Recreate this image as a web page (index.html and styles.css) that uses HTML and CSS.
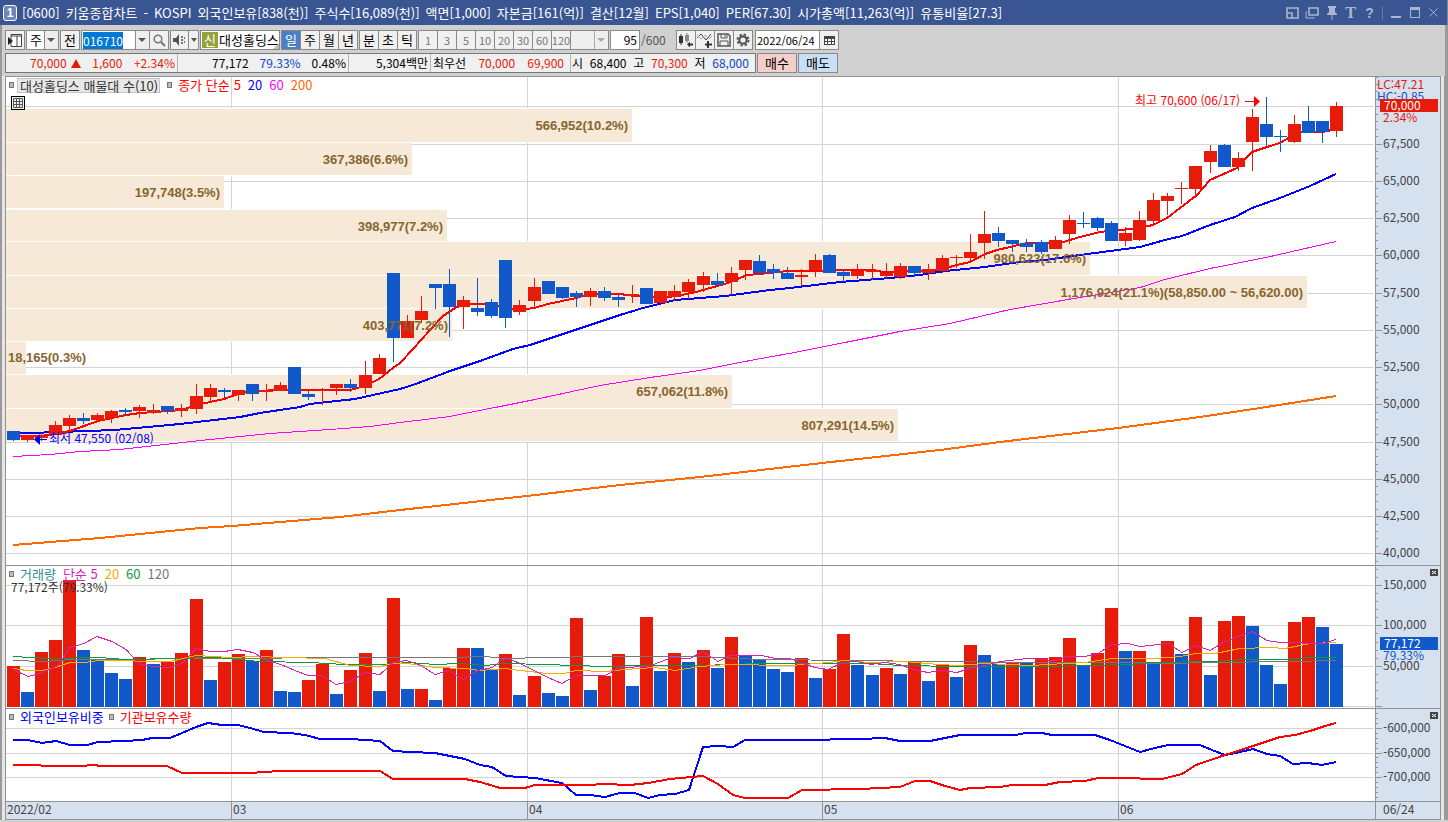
FILE: index.html
```html
<!DOCTYPE html>
<html lang="ko">
<head>
<meta charset="utf-8">
<title>[0600] 키움종합차트</title>
<link rel="stylesheet" href="styles.css">
</head>
<body>
<header class="titlebar">
  <span class="badge">1</span>
  <h1 class="title">
    <span>[0600]</span><span>키움종합차트</span><span>-</span><span>KOSPI</span><span>외국인보유[838(천)]</span><span>주식수[16,089(천)]</span><span>액면[1,000]</span><span>자본금[161(억)]</span><span>결산[12월]</span><span>EPS[1,040]</span><span>PER[67.30]</span><span>시가총액[11,263(억)]</span><span>유통비율[27.3]</span>
  </h1>
  <div class="window-buttons">
    <button type="button" aria-label="도킹"><svg width="13" height="12" viewBox="0 0 13 12"><path d="M1 1h11v10h-11z M1 6h5v5" fill="none" stroke="currentColor" stroke-width="1.6"/></svg></button>
    <button type="button" aria-label="새 창"><svg width="14" height="12" viewBox="0 0 14 12"><path d="M4 1h9v7h-9z" fill="none" stroke="currentColor" stroke-width="1.6"/><path d="M2 5h-1v6h8v-1" fill="none" stroke="currentColor"/></svg></button>
    <button type="button" aria-label="고정"><svg width="12" height="14" viewBox="0 0 12 14"><path d="M2 0h8v2h-1v4l2 2v1h-4.500v5h-1v-5h-4.500v-1l2-2v-4h-1z" fill="currentColor"/></svg></button>
    <button type="button" class="serif" aria-label="글꼴">T</button>
    <button type="button" class="help" aria-label="도움말">?</button>
    <span class="divider"></span>
    <button type="button" aria-label="최소화"><svg width="10" height="12" viewBox="0 0 10 12"><path d="M0 9h10v2h-10z" fill="currentColor"/></svg></button>
    <button type="button" aria-label="최대화"><svg width="10" height="11" viewBox="0 0 10 11"><path d="M0 0h10v11h-10z M1 3v7h8v-7z" fill="currentColor" fill-rule="evenodd"/></svg></button>
    <button type="button" aria-label="닫기"><svg width="9" height="9" viewBox="0 0 9 9"><path d="M.5.5l8 8M8.500.5l-8 8" stroke="currentColor" fill="none"/></svg></button>
  </div>
</header>

<div class="tools">
  <div class="row">
    <button type="button" class="box btn w20" aria-label="패널"><svg width="14" height="13" viewBox="0 0 14 13"><path d="M3 .5h10.500v12h-10.500z" fill="#fff" stroke="#444"/><path d="M3 2h11M9 2v10" stroke="#444" fill="none"/><path d="M0 3l5 4-5 4z" fill="#222"/></svg></button>
    <label class="combo w33"><select aria-label="종목 종류"><option>주</option></select><svg class="arrow" width="14" height="18" viewBox="0 0 14 18"><path d="M0 0h14v18h-14z" fill="#eee"/><path d="M.5 0v18" stroke="#8a8a8a"/><path d="M3 7h8l-4 4z" fill="#555"/></svg></label>
    <button type="button" class="box btn w20">전</button>
    <div class="group">
      <label class="combo w69"><input id="code" value="016710" aria-label="종목코드"><svg class="arrow" width="14" height="18" viewBox="0 0 14 18"><path d="M0 0h14v18h-14z" fill="#eee"/><path d="M.5 0v18" stroke="#8a8a8a"/><path d="M3 7h8l-4 4z" fill="#555"/></svg></label>
      <button type="button" class="box btn w20" aria-label="검색"><svg width="13" height="13" viewBox="0 0 13 13"><circle cx="5" cy="5" r="3.800" fill="none" stroke="#777" stroke-width="1.500"/><path d="M8 8l4 4" stroke="#777" stroke-width="2.200"/></svg></button>
    </div>
    <div class="group">
      <button type="button" class="box btn w18" aria-label="음성"><svg width="14" height="12" viewBox="0 0 14 12"><path d="M0 4h3l3-4v12l-3-4h-3z" fill="#555"/><path d="M8 2h2v2h-2zM8 5h2v2h-2zM8 8h2v2h-2zM11 3h1v2h-1zM11 7h1v2h-1z" fill="#777"/></svg></button>
      <button type="button" class="box btn w11" aria-label="음성 메뉴"><svg width="6" height="4" viewBox="0 0 6 4"><path d="M0 0h6l-3 4z" fill="#555"/></svg></button>
    </div>
    <div class="box name"><span class="credit">신</span><span class="stock">대성홀딩스</span><svg class="corner" width="6" height="6" viewBox="0 0 6 6"><path d="M6 0v6h-6z" fill="#bbb"/></svg></div>
    <div class="group">
      <button type="button" class="box btn w20 on">일</button><button type="button" class="box btn w20">주</button><button type="button" class="box btn w20">월</button><button type="button" class="box btn w20">년</button>
    </div>
    <div class="group">
      <button type="button" class="box btn w20">분</button><button type="button" class="box btn w20">초</button><button type="button" class="box btn w20">틱</button>
    </div>
    <div class="group dim">
      <button type="button" class="box btn w20">1</button><button type="button" class="box btn w20">3</button><button type="button" class="box btn w20">5</button><button type="button" class="box btn w20">10</button><button type="button" class="box btn w20">20</button><button type="button" class="box btn w20">30</button><button type="button" class="box btn w20">60</button><button type="button" class="box btn w20">120</button>
      <label class="combo w39"><select aria-label="주기" disabled><option></option></select><svg class="arrow" width="14" height="18" viewBox="0 0 14 18"><path d="M0 0h14v18h-14z" fill="#eee"/><path d="M.5 0v18" stroke="#aaa"/><path d="M3 7h8l-4 4z" fill="#aaa"/></svg></label>
    </div>
    <input class="box count" value="95" aria-label="봉 개수"><span class="total">/600</span>
    <div class="group icons">
      <button type="button" class="box btn w20" aria-label="차트 유형 추가"><svg width="16" height="15" viewBox="0 0 16 15"><path d="M1 3h4v7h-4zM2.500 1h1v11h-1z" fill="#333"/><path d="M7 2h4v6h-4zM8.500 0h1v10h-1z" fill="#888"/><path d="M9 11.500l3-3v2h3v2h-3v2z" fill="#333"/></svg></button>
      <button type="button" class="box btn w20" aria-label="지표 추가"><svg width="16" height="15" viewBox="0 0 16 15"><path d="M0 5l4-4 5 6 5-6" fill="none" stroke="#444"/><path d="M0 2l4 4 4-4 4 4 3-3" fill="none" stroke="#aaa"/><path d="M11 8v7M8 11.500h7" stroke="#333" stroke-width="2"/></svg></button>
      <button type="button" class="box btn w20" aria-label="저장"><svg width="14" height="14" viewBox="0 0 14 14"><path d="M1 1h10l2 2v10h-12z" fill="none" stroke="#555" stroke-width="1.500"/><path d="M4 1v4h6v-4M3 13v-5h8v5M8 2v2" fill="none" stroke="#555"/></svg></button>
      <button type="button" class="box btn w20" aria-label="설정"><svg width="14" height="14" viewBox="0 0 14 14"><circle cx="7" cy="7" r="3.700" fill="none" stroke="#555" stroke-width="2.200"/><circle cx="7" cy="7" r="5.600" fill="none" stroke="#555" stroke-width="1.800" stroke-dasharray="2.400 2"/></svg></button>
    </div>
    <div class="group">
      <input class="box date" value="2022/06/24" aria-label="기준일">
      <button type="button" class="box btn w20" aria-label="달력"><svg width="11" height="10" viewBox="0 0 11 10"><path d="M0 1h11v9h-11z" fill="#444"/><path d="M1 4h2v2h-2zM4 4h3v2h-3zM8 4h2v2h-2zM1 7h2v2h-2zM4 7h3v2h-3zM8 7h2v2h-2z" fill="#fff"/></svg></button>
    </div>
  </div>

  <div class="row">
    <div class="box quote">
      <div class="seg s1 up"><span>70,000<svg class="tri" width="10" height="9" viewBox="0 0 10 9"><path d="M5 0l5 9h-10z" fill="currentColor"/></svg></span><span>1,600</span><span>+2.34%</span></div>
      <div class="seg s2"><span>77,172</span><span class="down">79.33%</span><span>0.48%</span></div>
      <div class="seg s3"><span>5,304백만</span></div>
      <div class="seg s4"><span>최우선</span><span class="up">70,000</span><span class="up">69,900</span></div>
      <div class="seg s5"><span>시</span><span>68,400</span><span>고</span><span class="up">70,300</span><span>저</span><span class="down">68,000</span></div>
    </div>
    <button type="button" class="box btn trade buy">매수</button>
    <button type="button" class="box btn trade sell">매도</button>
  </div>
</div>

<main class="chart">
  <section class="panel">
    <svg id="price"></svg>
    <div class="legend">
      <i class="dot"></i><span class="tag">대성홀딩스 매물대 수(10)</span><i class="dot gap"></i>
      <span class="ma5">종가 단순</span><span class="ma5">5</span><span class="ma20 sp">20</span><span class="ma60 sp">60</span><span class="ma200 sp">200</span>
    </div>
    <button type="button" class="grid-btn" aria-label="표 보기"><svg width="12" height="12" viewBox="0 0 12 12"><path d="M1.500 1.500h9v9h-9zM1 4.500h10M4.500 2v9M7.500 2v9M1 7.500h10" fill="none" stroke="#555"/></svg></button>
  </section>
  <section class="panel">
    <svg id="volume"></svg>
    <div class="legend">
      <i class="dot"></i><span class="vt">거래량</span><span class="v5 sp">단순 5</span><span class="v20 sp">20</span><span class="v60 sp">60</span><span class="v120 sp">120</span>
    </div>
    <div class="reading">77,172주(79.33%)</div>
    <button type="button" class="close" aria-label="거래량 닫기"><svg width="8" height="7" viewBox="0 0 8 7"><path d="M2 2l4 3M6 2l-4 3" stroke="#fff" fill="none"/></svg></button>
  </section>
  <section class="panel">
    <svg id="holding"></svg>
    <div class="legend">
      <i class="dot"></i><span class="ma20">외국인보유비중</span><i class="dot near"></i><span class="ma5">기관보유수량</span>
    </div>
    <button type="button" class="close" aria-label="보유량 닫기"><svg width="8" height="7" viewBox="0 0 8 7"><path d="M2 2l4 3M6 2l-4 3" stroke="#fff" fill="none"/></svg></button>
  </section>
  <section class="panel last"><svg id="dates"></svg></section>
</main>
<script src="chart.js"></script>
</body>
</html>
```
FILE: styles.css
```css
* { box-sizing: border-box; }
html { height: 100%; }
body {
  margin: 0; min-height: 100vh; display: flex; flex-direction: column;
  background: #d0d0d0; color: #000;
  font: 13px/14px "Noto Sans CJK KR", sans-serif;
}
button, input, select { font: inherit; color: inherit; margin: 0; padding: 0; border-radius: 0; }
button svg { display: block; }

.titlebar {
  flex: none; height: 25px; display: flex; align-items: center; padding: 0 7px 0 3px;
  background: #395592; color: #fff; border-right: 1px solid #7d8796;
}
.badge {
  width: 14px; height: 16px; border: 1px solid #fff; border-radius: 3px; background: #6f86b8;
  text-align: center; font: bold 12px/14px "Liberation Sans", sans-serif;
}
.title { margin: 0 0 0 5px; display: flex; gap: 6px; font: inherit; white-space: nowrap; }
.window-buttons { margin-left: auto; display: flex; align-items: center; gap: 6px; color: #a9b6d3; }
.window-buttons button { border: 0; background: none; min-width: 13px; display: flex; justify-content: center; }
.window-buttons .serif { font: bold 16px/16px "Liberation Serif", serif; }
.window-buttons .help { font: bold 14px/16px "Liberation Sans", sans-serif; }
.divider { width: 1px; height: 14px; background: #6b7ba3; }

.tools {
  flex: none; height: 51px; padding: 5px 5px 0 3px; display: flex; flex-direction: column; gap: 3px;
  border-left: 2px solid #9a9a9a; border-right: 3px solid #9a9a9a;
}
.row { display: flex; height: 20px; align-items: stretch; white-space: nowrap; gap: 1px; }
.group { display: flex; }
.group > * + * { margin-left: -1px; }
.box { border: 1px solid #8a8a8a; background: #f0f0f0; flex: none; }
.btn { display: flex; align-items: center; justify-content: center; }
.w11 { width: 11px; }
.w18 { width: 19px; }
.w20 { width: 20px; }
.w33 { width: 33px; }
.w69 { width: 69px; }
.w39 { width: 39px; }
.combo { position: relative; display: block; flex: none; }
.combo select, .combo input {
  display: block; width: 100%; height: 20px; padding: 0 15px 0 3px; appearance: none;
  background: #fff; border: 1px solid #8a8a8a; outline: none;
}
.combo input { font-size: 12px; padding-left: 1px; }
.combo select:disabled { background: #efefef; opacity: 1; }
.arrow { position: absolute; right: 1px; top: 1px; pointer-events: none; }
::selection { background: #0078d7; color: #fff; }
.name { width: 80px; display: flex; position: relative; background: #fff; align-items: center; padding-left: 1px; overflow: hidden; }
.credit { width: 16px; height: 16px; background: #93a33a; color: #fff; text-align: center; line-height: 16px; flex: none; }
.stock { margin-left: 1px; }
.corner { position: absolute; right: 0; bottom: 0; }
.on { background: #4a7fc4; color: #fff; }
.dim { color: #777; font-size: 11px; }
.count { width: 30px; text-align: right; background: #fff; padding-right: 2px; font-size: 12px; }
.total { width: 33px; color: #555; line-height: 20px; font-size: 12px; }
.icons { margin: 0 1px; }
.date { width: 65px; background: #fff; padding-left: 1px; font-size: 11px; }

.quote { display: flex; width: 751px; border-color: #777; font-size: 12px; }
.seg { display: flex; align-items: center; justify-content: space-between; border-right: 1px solid #b5b5b5; padding: 0 2px; }
.s1 { width: 172px; padding-left: 24px; }
.s2 { width: 171px; padding-left: 34px; }
.s3 { width: 82px; justify-content: flex-end; }
.s4 { width: 140px; padding-right: 6px; }
.s5 { flex: 1; border-right: 0; padding: 0 6px 0 1px; }
.tri { margin-left: 4px; }
.up { color: #e61b0a; }
.down { color: #1144cc; }
.trade { width: 40px; }
.buy { background: #f4cfca; }
.sell { background: #c8dff5; }

.chart {
  flex: 1; min-height: 400px; margin: 0 7px 2px 5px; display: grid;
  grid-template-rows: 489fr 143fr 93fr 17fr;
  border: 1px solid #929292; background: #fff;
  box-shadow: -3px 0 #e6e6e6, -5px 0 #9a9a9a, 3px 0 #e6e6e6, 7px 0 #9a9a9a;
}
.panel { position: relative; min-height: 0; border-bottom: 1px solid #929292; overflow: hidden; }
.last { border-bottom: 0; }
.panel > svg { position: absolute; left: 0; top: 0; width: 100%; height: 100%; }
.legend { position: absolute; left: 3px; top: 0; display: flex; align-items: center; white-space: nowrap; height: 16px; }
.dot { width: 5px; height: 6px; border: 1px solid #777; background: #bbb; margin-right: 6px; }
.dot.gap { margin: 0 6px 0 7px; }
.dot.near { margin: 0 6px 0 5px; }
.tag { border: 1px solid #c4c4c4; background: #e8e8e8; color: #333; padding: 0 1px 0 2px; line-height: 13px; margin-left: -3px; }
.legend .ma5 + .ma5 { margin-left: 4px; }
.sp { margin-left: 7px; }
.ma5 { color: #f00; }
.ma20 { color: #00f; }
.ma60 { color: #f0f; }
.ma200 { color: #f60; }
.vt { color: #2a9090; }
.v5 { color: #d91fb4; }
.v20 { color: #f0ad00; }
.v60 { color: #0a9a3a; }
.v120 { color: #777; }
.reading { position: absolute; left: 5px; top: 14px; color: #333; font-size: 12px; }
.grid-btn { position: absolute; left: 5px; top: 19px; width: 14px; height: 14px; border: 1px solid #000; background: #eee; }
.close { position: absolute; right: 2px; top: 3px; width: 8px; height: 7px; border: 0; background: #444; }

svg text { font: 12px "Noto Sans CJK KR", sans-serif; fill: #444; }
svg text.band { font: bold 13px "Liberation Sans", sans-serif; fill: #86662e; }
svg text.blue { fill: #00f; }
svg text.red { fill: #f00; }
svg text.axis-up { fill: #e61b0a; }
svg text.axis-down { fill: #1155cc; }
svg text.white { fill: #fff; }
```
FILE: chart.js
```js
const UP = '#e61b0a', DOWN = '#1159cb', GRID = '#d4d4d4', LINE = '#929292', AXIS = '#d6e1ef';
const PLOT = [6, 1375], RIGHT = 1440;
const MONTHS = [[231, '03'], [527, '04'], [822, '05'], [1118, '06']];

// direction, high, low, body top, body bottom
const candles = `d431,441,431,440 u435,442,435,440 u433,441,436,438 u421,435,425,435 u415,432,418,426 d413,424,418,421
u413,422,415,420 u410,423,411,418 d408,416,410,412 u405,418,407,411 u404,414,410,413 d406,414,406,411 u404,417,408,411
u384,414,396,409 u384,402,388,397 d388,398,390,392 u390,401,390,395 d384,401,384,394 u384,401,390,392 u382,391,385,391
d367,394,367,394 d390,400,394,397 u388,405,390,391 u384,395,384,388 d379,392,384,388 u361,394,375,388 u354,374,358,374
d273,362,273,338 u315,338,321,338 u296,323,311,320 d284,309,284,288 d269,337,284,307 u296,329,300,307 d278,316,308,312
d299,318,302,316 d260,328,260,318 u300,315,305,312 u278,308,287,301 d281,294,281,294 d287,299,287,298 d291,307,293,297
u288,306,291,297 d287,301,291,298 d294,307,297,300 u285,303,294,296 d288,304,288,304 u291,303,291,303 u285,301,291,297
u279,299,282,292 u272,292,276,285 d273,285,281,285 u267,295,273,282 u260,280,260,270 d255,273,261,273 d264,279,269,273
d267,279,273,279 u269,286,275,277 u254,277,260,270 d254,273,255,273 d269,282,272,276 u264,279,271,276 u264,280,270,272
u263,279,273,276 u263,279,266,277 d266,277,266,273 u264,280,269,273 u255,273,258,271 u255,268,257,258 u234,262,252,258
u211,259,234,243 d227,247,233,241 d240,252,240,244 d239,252,243,247 d240,254,242,252 u236,249,240,249 u215,244,220,234
d212,228,223,224 d217,231,218,228 d221,241,223,241 u227,246,233,241 u211,241,220,240 u193,224,200,221 u193,215,196,201
u182,204,188,189 u166,198,166,189 u145,173,151,162 d144,167,145,167 u152,171,158,167 u109,171,117,142 d97,146,124,137
d130,152,136,137 u115,143,124,142 d106,133,121,133 d121,143,121,132 u102,137,106,131`;

const volumes = `u666 d692 u652 u640 u580 d650 d660 d673 d679 u657 d664 u662 u653 u599 d680 u662 u654 d661 u650 d691 d692 u680
u664 d694 u670 u653 d691 u598 d689 u689 d700 u668 u648 d648 d669 u654 d695 u676 d693 d696 u618 d690 u676 u654 d686 u617
d671 u653 d662 u650 d668 u637 d656 d659 d669 d672 u658 d678 u669 u634 d665 d675 u668 d674 u662 d681 u664 d677 u645 d655
d664 u662 d663 u658 u657 u638 d666 u653 u608 d651 u651 d663 u641 d654 u617 d675 u621 u616 d626 d665 d684 u622 u617 d627 d644`;

const bands = [
  [109, 142, 632, '566,952(10.2%)'], [143, 175, 412, '367,386(6.6%)'], [176, 208, 224, '197,748(3.5%)'],
  [210, 241, 447, '398,977(7.2%)'], [242, 275, 1090, '980,623(17.6%)'],
  [276, 308, 1307, '1,176,924(21.1%)(58,850.00 ~ 56,620.00)'], [309, 341, 452, '403,771(7.2%)'],
  [342, 374, 26, '18,165(0.3%)'], [375, 408, 732, '657,062(11.8%)'], [409, 441, 898, '807,291(14.5%)']
];

const priceLines = [
  ['#ff6a00', 2, '13,545 100,538 200,528 232,526 340,517 400,510 527,496 620,485 700,477 822,463 940,450 1000,442 1118,428 1200,417 1260,408 1336,396'],
  ['#ff00ff', 1, '13,456 50,454 80,451 120,449 165,444 200,440 240,436 270,433 330,429 370,426 400,422 450,416 500,406 535,399 600,385 650,377 700,370 750,360 800,351 850,341 900,331 950,323 1010,309 1080,297 1140,287 1165,279 1210,268 1266,257 1336,241'],
  ['#0000ff', 2, '13,434 28,433 60,432 115,430 180,424 240,417 260,413 300,407 310,404 355,399 400,389 413,385 450,371 480,361 513,349 530,345 560,335 590,325 620,315 643,308 675,300 725,296 770,290 790,288 840,282 890,278 920,275 945,271 985,267 1020,262 1045,260 1080,255 1140,247 1165,240 1182,236 1210,225 1235,217 1252,208 1280,198 1310,186 1336,174'],
  ['#ff0000', 2, '13,437 27,436 41,436 55,434 70,431 84,426 98,421 112,418 126,415 140,413 154,412 182,410 196,405 210,402 224,399 238,394 252,391 285,390 350,390 365,386 379,379 393,368 400,363 413,349 430,330 443,316 455,308 465,304 492,304 506,309 520,310 534,308 548,304 562,301 576,298 590,294 620,294 634,296 668,297 682,295 696,292 710,288 725,284 747,275 770,273 787,271 873,270 883,272 940,270 953,266 970,262 985,254 997,250 1027,243 1060,243 1080,237 1100,232 1118,230 1133,229 1153,225 1167,218 1197,195 1210,180 1237,168 1252,152 1267,147 1280,143 1290,137 1300,132 1323,132 1336,129']
];

const volumeLines = [
  ['#777777', 1, '13,660 45,661 70,659 240,658 325,657 450,657 485,656 505,658 545,657 600,656 700,656 760,659 860,660 925,661 1030,662 1120,662 1170,663 1210,662 1290,661 1336,660'],
  ['#0a9a3a', 1, '13,656 50,658 100,657 125,659 175,658 215,657 260,661 310,662 345,664 380,664 410,662 435,664 460,663 485,665 505,663 545,664 605,666 640,665 700,665 760,663 870,663 900,665 960,666 1045,666 1090,665 1130,664 1150,662 1215,661 1245,659 1285,659 1310,657 1336,657'],
  ['#f0ad00', 1, '13,668 27,670 42,670 55,667 70,662 85,662 98,660 170,661 196,655 230,657 255,656 287,657 325,658 350,665 380,666 393,663 407,663 435,667 465,668 480,670 505,668 520,670 548,673 564,673 576,670 605,671 625,669 655,667 675,670 700,666 727,664 790,665 830,662 843,660 870,662 905,661 925,663 957,665 985,663 1030,665 1085,662 1112,658 1155,658 1180,656 1196,653 1215,653 1240,648 1270,647 1285,648 1310,643 1336,642'],
  ['#d91fb4', 1, '13,669 28,676 43,672 58,665 70,647 84,643 97,636 112,641 126,649 140,664 154,666 168,667 182,663 196,648 210,651 224,651 238,649 253,652 267,660 281,664 295,670 308,675 322,675 336,684 350,681 365,672 380,674 393,662 407,660 421,665 435,674 449,670 463,679 478,670 492,667 506,657 520,663 534,670 548,677 562,683 576,675 605,675 620,667 648,666 672,657 690,658 703,651 718,661 730,655 762,655 775,658 790,658 803,663 815,667 828,669 843,662 857,661 871,664 885,662 900,664 913,669 928,672 942,670 957,672 972,667 985,665 1000,661 1028,658 1055,660 1068,656 1085,656 1098,653 1112,644 1128,643 1140,646 1168,643 1182,652 1196,645 1210,650 1225,641 1252,631 1267,640 1280,642 1323,643 1336,639']
];

const holdingLines = [
  ['#0000ff', 2, '13,740 28,740 42,743 56,741 70,745 87,745 98,742 125,741 142,740 152,738 170,738 182,733 196,727 208,723 222,725 238,725 250,728 264,732 290,733 305,735 320,739 350,739 380,741 393,751 410,752 435,753 465,759 480,765 492,767 506,776 535,778 562,783 576,795 590,795 605,797 620,793 635,793 648,798 660,795 675,794 689,790 703,747 718,746 733,747 745,740 800,740 860,739 885,738 900,741 930,741 945,738 960,735 1016,735 1025,733 1042,733 1052,735 1095,735 1110,740 1125,746 1140,752 1155,748 1168,745 1200,745 1212,750 1225,755 1240,752 1253,749 1267,754 1280,756 1293,764 1308,763 1322,765 1336,762'],
  ['#ff0000', 2, '13,765 40,765 42,766 80,766 95,765 100,766 167,766 182,773 250,773 280,771 380,771 393,779 465,779 480,782 500,788 525,788 535,785 590,785 603,784 630,785 648,783 670,779 703,776 718,784 733,795 745,798 788,798 802,790 860,789 900,787 915,781 930,781 945,786 960,790 970,788 1000,787 1012,785 1045,785 1060,782 1085,781 1098,778 1135,778 1145,779 1162,779 1182,774 1196,765 1225,755 1250,747 1280,737 1295,735 1310,731 1325,726 1336,723']
];

// Draws one panel; the time axis stretches, the value axis keeps its width.
function surface(id, y0, y1) {
  const svg = document.getElementById(id);
  const W = svg.clientWidth, H = svg.clientHeight, out = [];
  const plotWidth = W - (RIGHT - PLOT[1]);
  const x = v => v > PLOT[1] - 1 ? W - (RIGHT - v) : (v - PLOT[0]) * plotWidth / (PLOT[1] - PLOT[0]);
  const y = v => (v - y0) * H / (y1 - y0);
  const api = {
    rect(l, t, r, b, fill) {
      out.push(`<rect x="${x(l)}" y="${y(t)}" width="${x(r) - x(l)}" height="${y(b) - y(t)}" fill="${fill}" shape-rendering="crispEdges"/>`);
    },
    lines(list) {
      for (const [color, width, pts] of list) {
        const shift = width === 1 ? 0.5 : 0;
        const p = pts.split(' ').map(s => s.split(',').map(Number)).map(([a, b]) => `${x(a)},${y(b) + shift}`).join(' ');
        out.push(`<polyline points="${p}" fill="none" stroke="${color}" stroke-width="${width}" shape-rendering="crispEdges"/>`);
      }
    },
    path(pts, fill) {
      out.push(`<polygon points="${pts.map(([a, b]) => x(a) + ',' + y(b)).join(' ')}" fill="${fill}"/>`);
    },
    text(l, base, str, cls = '', anchor = 'start') {
      out.push(`<text x="${x(l)}" y="${y(base)}" class="${cls}" text-anchor="${anchor}">${str}</text>`);
    },
    frame(gridRows) {
      for (const g of gridRows) api.rect(6, g, 1374, g + 1, GRID);
      for (const [m] of MONTHS) api.rect(m, y0, m + 1, y1, GRID);
    },
    axis() {
      api.rect(1375, y0, 1440, y1, AXIS);
      api.rect(1375, y0, 1376, y1, LINE);
    },
    ticks(from, step, n, every) {
      for (let i = 0; i < n; i++) {
        const t = Math.round(from + i * step);
        api.rect(1376, t, i % every ? 1378 : 1382, t + 1, LINE);
      }
    },
    minor(list) {
      for (const t of list) api.rect(1376, t, 1378, t + 1, LINE);
    },
    done() { svg.innerHTML = out.join(''); }
  };
  return api;
}

const slot = i => 7 + Math.floor(i * 14.0833);

function drawPrice() {
  const s = surface('price', 77, 565);
  const rows = Array.from({ length: 13 }, (_, i) => Math.round(106.3 + i * 37.25));
  s.frame(rows);
  for (const [t, b, r] of bands) {
    s.rect(6, t - 1, r, b + 1, '#ffffff');
    s.rect(6, t, r, b, '#f6e9d7');
  }
  s.lines(priceLines);
  candles.split(/\s+/).forEach((c, i) => {
    const color = c[0] === 'u' ? UP : DOWN, [h, l, t, b] = c.slice(1).split(',').map(Number), x = slot(i);
    s.rect(x + 6, h, x + 7, l, color);
    s.rect(x, t, x + 13, b, color);
  });
  for (const [t, , r, label] of bands) {
    if (r < 100) s.text(8, t + 20, label, 'band');
    else s.text(r - 4, t + 21, label, 'band', 'end');
  }
  s.text(1240, 105, '최고 70,600 (06/17)', 'red', 'end');
  s.rect(1245, 101, 1255, 102, '#f00');
  s.path([[1254, 96], [1260, 101.5], [1254, 107]], '#f00');
  s.rect(38, 439, 47, 440, '#00f');
  s.path([[40, 434], [34, 439.5], [40, 445]], '#00f');
  s.text(49, 443, '최저 47,550 (02/08)', 'blue');
  s.axis();
  s.ticks(106.3, 7.45, 62, 5);
  s.minor([77, 84, 91, 99]);
  rows.slice(1).forEach((g, i) => s.text(1383, g + 4, (67500 - i * 2500).toLocaleString('en-US')));
  s.text(1377, 89, 'LC:47.21', 'axis-up');
  s.text(1377, 101, 'HC:-0.85', 'axis-down');
  s.rect(1380, 99, 1438, 112, UP);
  s.text(1384, 110, '70,000', 'white');
  s.text(1383, 122, '2.34%', 'axis-up');
  s.done();
}

function drawVolume() {
  const s = surface('volume', 566, 708);
  s.frame([585, 625, 666, 706]);
  volumes.split(/\s+/).forEach((v, i) => {
    s.rect(slot(i), Number(v.slice(1)), slot(i) + 13, 707, v[0] === 'u' ? UP : DOWN);
  });
  s.lines(volumeLines);
  s.axis();
  s.ticks(585, 8.08, 16, 5);
  s.minor([569, 577]);
  s.text(1383, 589, '150,000');
  s.text(1383, 629, '100,000');
  s.text(1383, 670, '50,000');
  s.rect(1380, 650, 1438, 661, AXIS);
  s.text(1383, 660, '79.33%', 'axis-down');
  s.rect(1380, 637, 1438, 650, DOWN);
  s.text(1384, 648, '77,172', 'white');
  s.done();
}

function drawHolding() {
  const s = surface('holding', 709, 801);
  s.frame([728, 753, 777]);
  s.lines(holdingLines);
  s.axis();
  s.ticks(728, 4.9, 15, 5);
  s.minor([713, 718, 723]);
  s.text(1383, 732, '-600,000');
  s.text(1383, 757, '-650,000');
  s.text(1383, 781, '-700,000');
  s.done();
}

function drawDates() {
  const s = surface('dates', 802, 819);
  s.rect(6, 802, 1375, 819, AXIS);
  s.axis();
  s.text(7, 814, '2022/02');
  for (const [m, label] of MONTHS) {
    s.rect(m, 802, m + 1, 819, LINE);
    s.text(m + 2, 814, label);
  }
  s.text(1383, 814, '06/24');
  s.done();
}

function draw() {
  drawPrice();
  drawVolume();
  drawHolding();
  drawDates();
}

draw();
window.addEventListener('resize', draw);

const code = document.getElementById('code');
code.focus();
code.select();
```
